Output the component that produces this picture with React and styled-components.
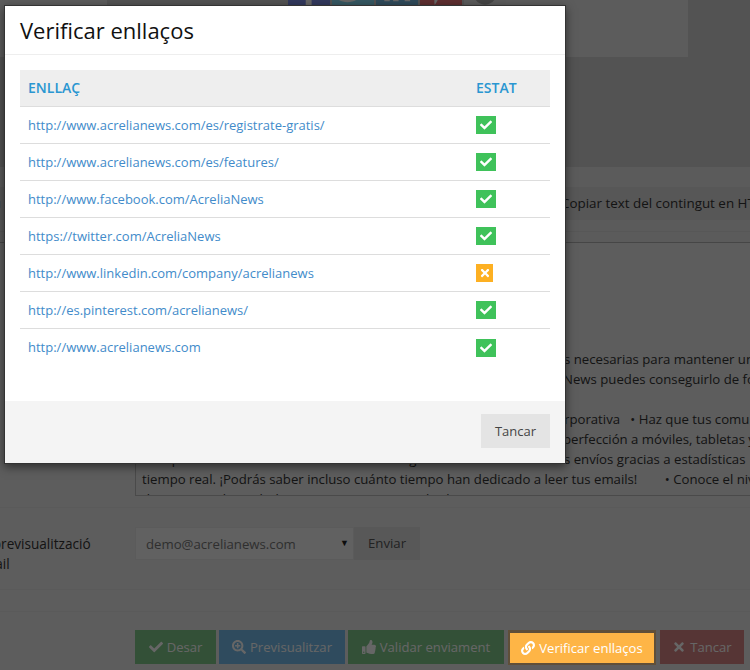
import React from "react";
import styled, { createGlobalStyle } from "styled-components";
import { FaCheck, FaTimes, FaLink, FaSearchPlus, FaThumbsUp, FaFacebookF, FaTwitter, FaLinkedinIn, FaPinterestP, FaCircle } from "react-icons/fa";

const Global = createGlobalStyle`
  html, body { margin: 0; padding: 0; }
  body { font-family: "Open Sans", "Liberation Sans", sans-serif; font-size: 14px; color: #555; }
  * { box-sizing: border-box; }
`;

const Viewport = styled.div`
  position: relative;
  width: 750px;
  height: 670px;
  overflow: hidden;
  background: #e8e8e8;
`;
const Page = styled.div`
  display: flex;
  flex-direction: column;
  margin-left: -8px;
  width: 758px;
`;
const TopRow = styled.div`
  display: flex;
  height: 57px;
  padding-left: 8px;
  background: #cfcfcf;
`;
const TopSpacer = styled.div`
  width: ${p => p.$w}px;
  background: ${p => p.$bg};
`;
const Social = styled.div`
  display: flex;
  gap: 2px;
  margin-top: -37px;
  height: 42px;
`;
const SocialButton = styled.div`
  width: 42px;
  height: 42px;
  background: ${p => p.$bg};
  color: #fff;
  font-size: 30px;
  display: flex;
  align-items: flex-end;
  justify-content: center;
`;
const DarkBand = styled.div`
  height: 110px;
  background: #cfcfcf;
`;
const PaleBand = styled.div`
  height: ${p => p.$h}px;
  background: #e4e4e4;
  border-bottom: ${p => (p.$line ? `1px solid ${p.$line}` : "none")};
`;
const CopyRow = styled.div`
  height: 33px;
  background: #d9d9d9;
  display: flex;
  align-items: center;
  line-height: 35px;
  color: #333;
  font-size: 13.4px;
`;
const CopyLabel = styled.span`
  margin-left: -27px;
  width: 596px;
  flex: none;
`;
const CopyLink = styled.span`
  white-space: nowrap;
`;
const EditorRow = styled.div`
  height: 265px;
  padding-left: 143px;
  border-bottom: 1px solid #e0e0e0;
`;
const Editor = styled.div`
  height: 253px;
  width: 640px;
  border: 1px solid #b8b8b8;
  border-top: none;
  overflow: hidden;
  padding: 106px 0 0 6px;
  color: #333;
  font-size: 13.2px;
  line-height: 20px;
`;
const EditorLine = styled.div`
  white-space: pre;
  min-height: 20px;
`;
const EditorLead = styled.span`
  display: inline-block;
  vertical-align: top;
  overflow: hidden;
  width: ${p => p.$w}px;
`;
const SendRow = styled.div`
  display: flex;
  height: 82px;
  padding-top: 19px;
  border-bottom: 1px solid #e0e0e0;
`;
const FieldLabel = styled.div`
  flex: none;
  width: 185px;
  margin-left: -42px;
  line-height: 20px;
  padding-top: 7px;
  color: #333;
  font-size: 13.6px;
`;
const SelectBox = styled.div`
  width: 219px;
  height: 33px;
  background: #f2f2f2;
  border: 1px solid #e4e4e4;
  padding-left: 10px;
  line-height: 33px;
  display: flex;
  justify-content: space-between;
  color: #777;
  font-size: 13.2px;
`;
const Caret = styled.span`
  font-size: 9px;
  color: #222;
  margin-right: 4px;
  margin-top: -2px;
`;
const SendButton = styled.div`
  width: 66px;
  height: 33px;
  background: #ddd;
  color: #555;
  line-height: 33px;
  text-align: center;
  font-size: 13.2px;
`;
const EmptyRow = styled.div`
  height: 22px;
  border-bottom: 1px solid #e0e0e0;
`;
const Actions = styled.div`
  display: flex;
  gap: 3px;
  padding: 18px 0 0 143px;
`;
const ActionButton = styled.div`
  position: relative;
  height: 34px;
  width: ${p => p.$w}px;
  background: ${p => p.$bg};
  color: #fff;
  display: flex;
  align-items: center;
  justify-content: center;
  gap: 4px;
  white-space: nowrap;
  font-size: 13.1px;
  svg { font-size: 14px; }
`;
const ActiveButton = styled(ActionButton)`
  z-index: 20;
  margin: 0 1px;
  width: 148px;
  height: 35px;
  border: solid #5f4f39;
  border-width: 3px 2px 2px;
  background: #feb546;
`;
const Backdrop = styled.div`
  position: absolute;
  inset: 0;
  z-index: 10;
  background: rgba(0, 0, 0, 0.6);
`;
const Modal = styled.div`
  position: absolute;
  z-index: 30;
  left: 4px;
  top: 5px;
  width: 562px;
  height: 459px;
  border: 1px solid #333;
  background: #fff;
  box-shadow: 0 3px 9px rgba(0, 0, 0, 0.5);
  display: flex;
  flex-direction: column;
`;
const ModalHeader = styled.div`
  height: 49px;
  padding-left: 15px;
  border-bottom: 1px solid #eee;
`;
const ModalTitle = styled.h4`
  margin: 0;
  font-size: 22px;
  font-weight: 400;
  line-height: 49px;
  color: #111;
`;
const ModalBody = styled.div`
  flex: 1;
  padding: 15px;
`;
const Table = styled.table`
  width: 530px;
  border-collapse: collapse;
  table-layout: fixed;
`;
const Th = styled.th`
  height: 36px;
  padding: 0 8px;
  width: ${p => p.$w || "auto"};
  background: #eee;
  border-bottom: 1px solid #ddd;
  color: #2a96d1;
  font-size: 14px;
  font-weight: 600;
  text-align: left;
`;
const Tr = styled.tr`
  & + & td { border-top: 1px solid #ddd; }
`;
const Td = styled.td`
  height: 37px;
  padding: 0 8px;
  font-size: 13px;
`;
const LinkText = styled.a`
  color: #428bca;
  text-decoration: none;
`;
const Badge = styled.span`
  display: inline-flex;
  align-items: center;
  justify-content: center;
  vertical-align: middle;
  width: ${p => (p.$ok ? 20 : 17)}px;
  height: 18px;
  background: ${p => (p.$ok ? "#3fc25a" : "#fdb022")};
  color: #fff;
  font-size: 12px;
`;
const ModalFooter = styled.div`
  height: 62px;
  background: #f4f4f4;
  padding: 13px 15px;
  display: flex;
  justify-content: flex-end;
`;
const CloseButton = styled.div`
  width: 69px;
  height: 34px;
  background: #e4e4e4;
  color: #444;
  line-height: 34px;
  text-align: center;
  font-size: 13px;
`;

const links = [
  ["http://www.acrelianews.com/es/registrate-gratis/", true],
  ["http://www.acrelianews.com/es/features/", true],
  ["http://www.facebook.com/AcreliaNews", true],
  ["https://twitter.com/AcreliaNews", true],
  ["http://www.linkedin.com/company/acrelianews", false],
  ["http://es.pinterest.com/acrelianews/", true],
  ["http://www.acrelianews.com", true],
];

const editorLines = [
  { lead: "¿Quieres que tus campañas de email sean un éxito? Tienes las herramienta", w: 422, rest: "s necesarias para mantener un contacto" },
  { lead: "contacto directo con todos tus clientes y con Acrelia ", w: 421, rest: "News puedes conseguirlo de forma" },
  { rest: "" },
  { lead: "• Diseña boletines con tu propia imagen co", w: 422, rest: "rporativa   • Haz que tus comunicaciones" },
  { lead: "lleguen con un diseño que se adapta a la ", w: 421, rest: "perfección a móviles, tabletas y" },
  { lead: "cualquier lector de correo      • Realiza un seguimiento efectivo de tu", w: 422, rest: "s envíos gracias a estadísticas" },
  { rest: "tiempo real. ¡Podrás saber incluso cuánto tiempo han dedicado a leer tus emails!        • Conoce el nivel" },
  { rest: "de apertura de tus boletines y mejora tus resultados" },
];

export default function App() {
  return (
    <Viewport>
      <Global />
      <Page>
        <TopRow>
          <TopSpacer $w={107} $bg="#e6e6e6" />
          <TopSpacer $w={181} $bg="#cfcfcf" />
          <Social>
            <SocialButton $bg="#7e8fe8"><FaFacebookF /></SocialButton>
            <SocialButton $bg="#87ddf5"><FaTwitter /></SocialButton>
            <SocialButton $bg="#76b8e0"><FaLinkedinIn /></SocialButton>
            <SocialButton $bg="#eb7378"><FaPinterestP /></SocialButton>
            <SocialButton $bg="#e4e4e4"><FaCircle color="#aaa" size={24} /></SocialButton>
          </Social>
          <TopSpacer $w={182} $bg="#e6e6e6" />
        </TopRow>
        <DarkBand />
        <PaleBand $h={20} />
        <CopyRow>
          <CopyLabel>Menú</CopyLabel>
          <CopyLink>Copiar text del contingut en HTML</CopyLink>
        </CopyRow>
        <PaleBand $h={12} $line="#dadada" />
        <PaleBand $h={11} $line="#b0b0b0" />
        <EditorRow>
          <Editor>
            {editorLines.map((l, i) => (
              <EditorLine key={i}>
                {l.lead && <EditorLead $w={l.w}>{l.lead}</EditorLead>}
                {l.rest}
              </EditorLine>
            ))}
          </Editor>
        </EditorRow>
        <SendRow>
          <FieldLabel>Enviar previsualització<br />per email</FieldLabel>
          <SelectBox>demo@acrelianews.com<Caret>▼</Caret></SelectBox>
          <SendButton>Enviar</SendButton>
        </SendRow>
        <EmptyRow />
        <Actions>
          <ActionButton $w={81} $bg="#80c78a"><FaCheck />Desar</ActionButton>
          <ActionButton $w={126} $bg="#76bceb"><FaSearchPlus />Previsualitzar</ActionButton>
          <ActionButton $w={156} $bg="#80c78a"><FaThumbsUp />Validar enviament</ActionButton>
          <ActiveButton><FaLink />Verificar enllaços</ActiveButton>
          <ActionButton $w={84} $bg="#d88684"><FaTimes />Tancar</ActionButton>
        </Actions>
      </Page>
      <Backdrop />
      <Modal>
        <ModalHeader><ModalTitle>Verificar enllaços</ModalTitle></ModalHeader>
        <ModalBody>
          <Table>
            <thead>
              <tr><Th>ENLLAÇ</Th><Th $w="82px">ESTAT</Th></tr>
            </thead>
            <tbody>
              {links.map(([url, ok]) => (
                <Tr key={url}>
                  <Td><LinkText href="#">{url}</LinkText></Td>
                  <Td><Badge $ok={ok}>{ok ? <FaCheck /> : <FaTimes />}</Badge></Td>
                </Tr>
              ))}
            </tbody>
          </Table>
        </ModalBody>
        <ModalFooter><CloseButton>Tancar</CloseButton></ModalFooter>
      </Modal>
    </Viewport>
  );
}
